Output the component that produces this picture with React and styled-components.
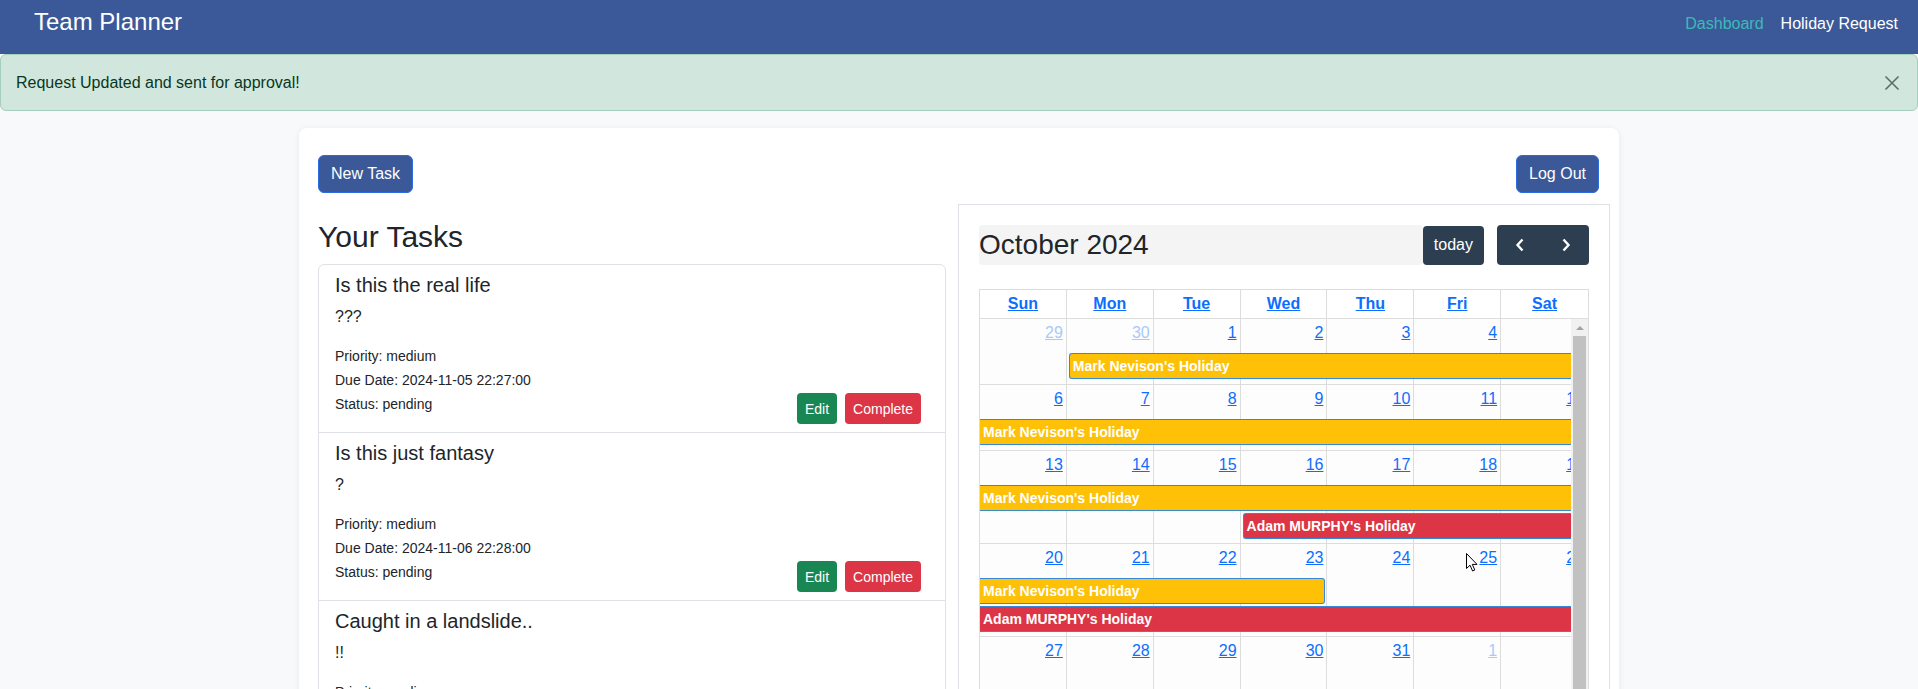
import React from 'react'
import styled, { createGlobalStyle } from 'styled-components'

const tasks = [
  { title: 'Is this the real life', desc: '???', priority: 'medium', due: '2024-11-05 22:27:00', status: 'pending' },
  { title: 'Is this just fantasy', desc: '?', priority: 'medium', due: '2024-11-06 22:28:00', status: 'pending' },
  { title: 'Caught in a landslide..', desc: '!!', priority: 'medium', due: '2024-11-07 22:29:00', status: 'pending' },
]

const days = ['Sun', 'Mon', 'Tue', 'Wed', 'Thu', 'Fri', 'Sat']

// start/end are column indexes (0-6), open* means the event continues into another week
const weeks = [
  { dates: [29, 30, 1, 2, 3, 4, 5], other: [0, 1], events: [
    { lane: 1, start: 1, end: 6, label: "Mark Nevison's Holiday", kind: 'yellow', openEnd: true },
  ] },
  { dates: [6, 7, 8, 9, 10, 11, 12], other: [], events: [
    { lane: 1, start: 0, end: 6, label: "Mark Nevison's Holiday", kind: 'yellow', openStart: true, openEnd: true },
  ] },
  { dates: [13, 14, 15, 16, 17, 18, 19], other: [], events: [
    { lane: 1, start: 0, end: 6, label: "Mark Nevison's Holiday", kind: 'yellow', openStart: true, openEnd: true },
    { lane: 2, start: 3, end: 6, label: "Adam MURPHY's Holiday", kind: 'red', openEnd: true },
  ] },
  { dates: [20, 21, 22, 23, 24, 25, 26], other: [], events: [
    { lane: 1, start: 0, end: 3, label: "Mark Nevison's Holiday", kind: 'yellow', openStart: true },
    { lane: 2, start: 0, end: 6, label: "Adam MURPHY's Holiday", kind: 'red', openStart: true, openEnd: true },
  ] },
  { dates: [27, 28, 29, 30, 31, 1, 2], other: [5, 6], events: [] },
  { dates: [3, 4, 5, 6, 7, 8, 9], other: [0, 1, 2, 3, 4, 5, 6], events: [] },
]

function App() {
  return (
    <>
      <GlobalStyle />
      <Navbar>
        <Brand href="#">Team Planner</Brand>
        <NavLinks>
          <NavLink href="#" $active>Dashboard</NavLink>
          <NavLink href="#">Holiday Request</NavLink>
        </NavLinks>
      </Navbar>

      <Alert>
        <span>Request Updated and sent for approval!</span>
        <CloseButton aria-label="Close">
          <svg width="16" height="16" viewBox="0 0 16 16">
            <path d="M1.5 1.5 L14.5 14.5 M14.5 1.5 L1.5 14.5" stroke="currentColor" strokeWidth="1.6" fill="none" />
          </svg>
        </CloseButton>
      </Alert>

      <Card>
        <TopBar>
          <PrimaryButton>New Task</PrimaryButton>
          <PrimaryButton>Log Out</PrimaryButton>
        </TopBar>

        <Columns>
          <div>
            <Heading>Your Tasks</Heading>
            <TaskList>
              {tasks.map((t) => (
                <TaskItem key={t.title}>
                  <TaskTitle>{t.title}</TaskTitle>
                  <TaskDesc>{t.desc}</TaskDesc>
                  <TaskRow>
                    <Meta>
                      <div>Priority: {t.priority}</div>
                      <div>Due Date: {t.due}</div>
                      <div>Status: {t.status}</div>
                    </Meta>
                    <Actions>
                      <SmallButton $color="#198754">Edit</SmallButton>
                      <SmallButton $color="#dc3545">Complete</SmallButton>
                    </Actions>
                  </TaskRow>
                </TaskItem>
              ))}
            </TaskList>
          </div>

          <CalendarPanel>
            <Toolbar>
              <MonthTitle>October 2024</MonthTitle>
              <CalButton>today</CalButton>
              <ButtonGroup>
                <CalButton $grouped>
                  <svg width="12" height="16" viewBox="0 0 12 16">
                    <path d="M8.5 2.5 L3.5 8 L8.5 13.5" stroke="#fff" strokeWidth="2.4" fill="none" />
                  </svg>
                </CalButton>
                <CalButton $grouped>
                  <svg width="12" height="16" viewBox="0 0 12 16">
                    <path d="M3.5 2.5 L8.5 8 L3.5 13.5" stroke="#fff" strokeWidth="2.4" fill="none" />
                  </svg>
                </CalButton>
              </ButtonGroup>
            </Toolbar>

            <Grid>
              <HeadRow>
                {days.map((d) => (
                  <HeadCell key={d}><a href="#">{d}</a></HeadCell>
                ))}
              </HeadRow>
              <Body>
                {weeks.map((w, wi) => (
                  <Week key={wi} $lanes={Math.max(1, w.events.length)}>
                    {w.dates.map((d, i) => (
                      <DayCell key={'c' + i} style={{ gridColumn: i + 1 }} />
                    ))}
                    {w.dates.map((d, i) => (
                      <DayNumber key={'n' + i} style={{ gridColumn: i + 1 }} $other={w.other.includes(i)}>
                        <a href="#">{d}</a>
                      </DayNumber>
                    ))}
                    {w.events.map((e, ei) => (
                      <EventBar
                        key={'e' + ei}
                        $kind={e.kind}
                        $openStart={e.openStart}
                        $openEnd={e.openEnd}
                        style={{ gridColumn: `${e.start + 1} / ${e.end + 2}`, gridRow: e.lane + 1 }}
                      >
                        {e.label}
                      </EventBar>
                    ))}
                  </Week>
                ))}
                <Scrollbar>
                  <ScrollArrow />
                  <ScrollThumb />
                </Scrollbar>
              </Body>
            </Grid>

            <Cursor width="12" height="19" viewBox="0 0 12 19">
              <path d="M0.5 0.5 L0.5 15.5 L4 12.2 L6.6 18 L8.8 17 L6.3 11.4 L11 11.4 Z" fill="#fff" stroke="#000" strokeWidth="1" />
            </Cursor>
          </CalendarPanel>
        </Columns>
      </Card>
    </>
  )
}

export default App

const GlobalStyle = createGlobalStyle`
  html, body {
    margin: 0;
    padding: 0;
    overflow: hidden;
  }
  body {
    background: #f8f9fa;
    font-family: "Liberation Sans", Arial, sans-serif;
    color: #212529;
  }
  * {
    box-sizing: border-box;
  }
`

const Navbar = styled.nav`
  height: 54px;
  background: #3b5998;
  display: flex;
  align-items: flex-start;
  justify-content: space-between;
  padding: 0 20px 0 34px;
`

const Brand = styled.a`
  margin-top: 8px;
  color: #fff;
  font-size: 24px;
  line-height: 28px;
  text-decoration: none;
`

const NavLinks = styled.div`
  display: flex;
  gap: 17px;
  margin-top: 12px;
`

const NavLink = styled.a`
  font-size: 16px;
  line-height: 24px;
  text-decoration: none;
  color: ${(p) => (p.$active ? '#3dbab5' : '#fff')};
`

const Alert = styled.div`
  height: 57px;
  display: flex;
  align-items: center;
  justify-content: space-between;
  padding: 0 17px 0 15px;
  margin-bottom: 17px;
  background: #d1e7dd;
  border: 1px solid #a3cfbb;
  border-radius: 6px;
  color: #0a3622;
  font-size: 16px;
`

const CloseButton = styled.button`
  display: flex;
  padding: 0;
  border: 0;
  background: none;
  color: #5f6d67;
`

const Card = styled.div`
  width: 1320px;
  margin: 0 auto;
  background: #fff;
  border-radius: 8px;
  box-shadow: 0 1px 6px rgba(0, 0, 0, 0.07);
  padding: 27px 8px 0 19px;
`

const TopBar = styled.div`
  display: flex;
  justify-content: space-between;
  margin-right: 12px;
`

const PrimaryButton = styled.button`
  height: 38px;
  padding: 0 12px;
  background: #3b5998;
  border: 1px solid #2d6be0;
  border-radius: 6px;
  color: #fff;
  font-family: inherit;
  font-size: 16px;
`

const Columns = styled.div`
  display: grid;
  grid-template-columns: 628px 652px;
  gap: 12px;
  margin-top: 11px;
  align-items: start;
`

const Heading = styled.h2`
  margin: 15px 0 9px;
  font-size: 30px;
  line-height: 36px;
  font-weight: 400;
`

const TaskList = styled.div`
  border: 1px solid #dee2e6;
  border-radius: 6px;
`

const TaskItem = styled.div`
  padding: 8px 16px;
  border-bottom: 1px solid #dee2e6;
  &:last-child {
    border-bottom: 0;
  }
`

const TaskTitle = styled.h5`
  margin: 0 0 8px;
  font-size: 20px;
  line-height: 24px;
  font-weight: 400;
`

const TaskDesc = styled.p`
  margin: 0 0 15px;
  font-size: 16px;
  line-height: 24px;
`

const TaskRow = styled.div`
  display: flex;
  justify-content: space-between;
  align-items: flex-end;
`

const Meta = styled.div`
  font-size: 14px;
  line-height: 24px;
  margin-bottom: 8px;
`

const Actions = styled.div`
  display: flex;
  gap: 8px;
  margin-right: 8px;
`

const SmallButton = styled.button`
  height: 31px;
  padding: 0 8px;
  border: 0;
  border-radius: 4px;
  background: ${(p) => p.$color};
  color: #fff;
  font-family: inherit;
  font-size: 14px;
`

const CalendarPanel = styled.div`
  position: relative;
  border: 1px solid #dee2e6;
  padding: 20px;
`

const Toolbar = styled.div`
  display: flex;
  align-items: center;
  height: 40px;
`

const MonthTitle = styled.h2`
  flex: 1;
  margin: 0;
  height: 40px;
  background: #f4f4f4;
  border-radius: 4px;
  font-size: 28px;
  line-height: 40px;
  font-weight: 400;
`

const ButtonGroup = styled.div`
  display: flex;
  margin-left: 13px;
  border-radius: 4px;
  overflow: hidden;
`

const CalButton = styled.button`
  height: ${(p) => (p.$grouped ? '40px' : '39px')};
  width: ${(p) => (p.$grouped ? '46px' : 'auto')};
  padding: ${(p) => (p.$grouped ? '0' : '0 11px')};
  display: flex;
  align-items: center;
  justify-content: center;
  background: #2c3e50;
  border: 0;
  border-radius: ${(p) => (p.$grouped ? '0' : '4px')};
  color: #fff;
  font-family: inherit;
  font-size: 16px;
`

const Grid = styled.div`
  margin-top: 24px;
  border: 1px solid #ddd;
`

const HeadRow = styled.div`
  display: grid;
  grid-template-columns: repeat(7, 1fr);
  border-bottom: 1px solid #ddd;
`

const HeadCell = styled.div`
  height: 28px;
  line-height: 28px;
  text-align: center;
  font-weight: 700;
  font-size: 16px;
  border-right: 1px solid #ddd;
  &:last-child {
    border-right: 0;
  }
  a {
    color: #0d6efd;
  }
`

const Body = styled.div`
  position: relative;
  overflow: hidden;
  background: #fdfdfd;
`

const Week = styled.div`
  display: grid;
  grid-template-columns: repeat(7, 1fr);
  grid-template-rows: 32px repeat(${(p) => p.$lanes}, 26px) minmax(3px, 1fr);
  row-gap: 2px;
  min-height: 66px;
`

const DayCell = styled.div`
  grid-row: 1 / -1;
  border-right: 1px solid #ddd;
  border-bottom: 1px solid #ddd;
  &:nth-child(7) {
    border-right: 0;
  }
`

const DayNumber = styled.div`
  grid-row: 1;
  padding: 4px 4px 0;
  text-align: right;
  font-size: 16px;
  line-height: 20px;
  a {
    color: ${(p) => (p.$other ? '#a9c9f9' : '#0d6efd')};
  }
`

const EventBar = styled.div`
  height: 26px;
  margin: 0 ${(p) => (p.$openEnd ? '0' : '2px')} 0 ${(p) => (p.$openStart ? '0' : '2px')};
  padding: 0 3px;
  background: ${(p) => (p.$kind === 'red' ? '#dc3545' : '#ffc107')};
  border: 1px solid #3788d8;
  border-left-width: ${(p) => (p.$openStart ? '0' : '1px')};
  border-right-width: ${(p) => (p.$openEnd ? '0' : '1px')};
  border-radius: ${(p) => (p.$openStart ? '0' : '3px')} ${(p) => (p.$openEnd ? '0 0' : '3px 3px')} ${(p) => (p.$openStart ? '0' : '3px')};
  color: #fff;
  font-size: 14px;
  font-weight: 700;
  line-height: 24px;
  white-space: nowrap;
  overflow: hidden;
`

const Scrollbar = styled.div`
  position: absolute;
  top: 0;
  right: 0;
  bottom: 0;
  width: 17px;
  background: #f1f1f1;
  display: flex;
  flex-direction: column;
  align-items: center;
`

const ScrollArrow = styled.div`
  margin-top: 7px;
  width: 0;
  height: 0;
  border-left: 4px solid transparent;
  border-right: 4px solid transparent;
  border-bottom: 4px solid #a3a3a3;
`

const ScrollThumb = styled.div`
  margin-top: 6px;
  width: 13px;
  flex: 1;
  background: #c1c1c1;
`

const Cursor = styled.svg`
  position: absolute;
  left: 507px;
  top: 348px;
`
